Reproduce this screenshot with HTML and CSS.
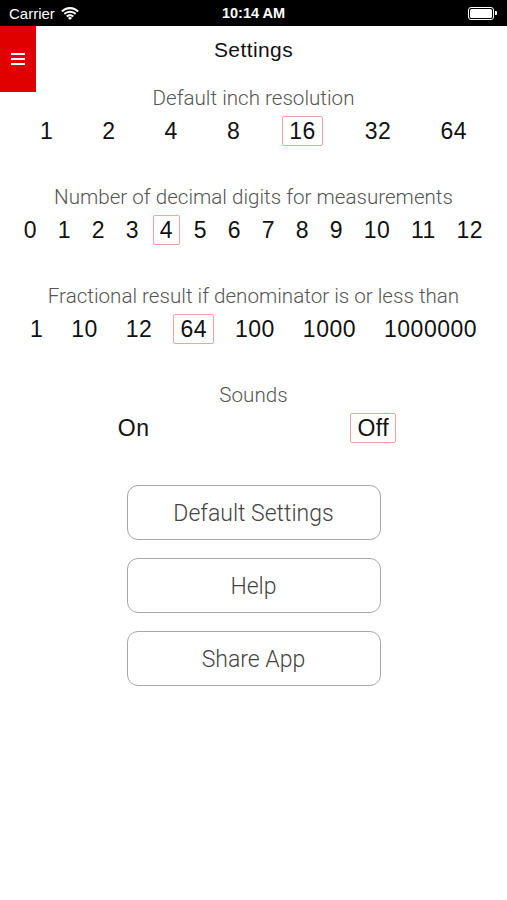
FILE: index.html
```html
<!DOCTYPE html>
<html lang="en">
<head>
  <meta charset="UTF-8" />
  <meta name="viewport" content="width=device-width, initial-scale=1.0"/>
  <title>Settings</title>
  <link rel="stylesheet" href="styles.css">
</head>
<body>

  <div class="status-bar">
    <div class="carrier">
      Carrier
      <svg class="wifi" width="18" height="13" viewBox="0 0 18 13">
        <path d="M9 2.2c2.9 0 5.5 1.1 7.4 3l1.4-1.5C15.5 1.4 12.4 0 9 0S2.5 1.4.2 3.7l1.4 1.5c1.9-1.9 4.5-3 7.4-3z" fill="#fff"/>
        <path d="M9 5.8c1.9 0 3.6.7 4.9 1.9l1.4-1.5C13.6 4.6 11.4 3.7 9 3.7S4.4 4.6 2.7 6.2l1.4 1.5C5.4 6.5 7.1 5.8 9 5.8z" fill="#fff"/>
        <path d="M9 9.3c1 0 1.8.4 2.5 1l1.4-1.5C11.9 7.9 10.5 7.3 9 7.3s-2.9.6-3.9 1.5l1.4 1.5c.7-.6 1.5-1 2.5-1z" fill="#fff"/>
        <path d="M9 13l2-2.1c-.5-.5-1.2-.8-2-.8s-1.5.3-2 .8z" fill="#fff"/>
      </svg>
    </div>
    <div class="clock">10:14 AM</div>
    <div class="battery">
      <span class="battery-body"><span class="battery-level"></span></span>
      <span class="battery-nub"></span>
    </div>
  </div>

  <div class="screen">
    <button class="menu-btn" aria-label="Menu">
      <span></span><span></span><span></span>
    </button>

    <h1>Settings</h1>

    <section class="option">
      <div class="label">Default inch resolution</div>
      <div class="choices wide">
        <span>1</span><span>2</span><span>4</span><span>8</span>
        <span class="selected">16</span><span>32</span><span>64</span>
      </div>
    </section>

    <section class="option">
      <div class="label">Number of decimal digits for measurements</div>
      <div class="choices tight">
        <span>0</span><span>1</span><span>2</span><span>3</span>
        <span class="selected">4</span><span>5</span><span>6</span><span>7</span>
        <span>8</span><span>9</span><span>10</span><span>11</span><span>12</span>
      </div>
    </section>

    <section class="option">
      <div class="label">Fractional result if denominator is or less than</div>
      <div class="choices medium">
        <span>1</span><span>10</span><span>12</span>
        <span class="selected">64</span><span>100</span><span>1000</span><span>1000000</span>
      </div>
    </section>

    <section class="option">
      <div class="label">Sounds</div>
      <div class="choices sounds">
        <span>On</span><span class="selected">Off</span>
      </div>
    </section>

    <div class="actions">
      <button class="action">Default Settings</button>
      <button class="action">Help</button>
      <button class="action">Share App</button>
    </div>
  </div>

</body>
</html>
```

FILE: styles.css
```css
body {
  margin: 0;
  font-family: "Liberation Sans", Arial, sans-serif;
  background-color: white;
  color: #111;
}

.status-bar {
  height: 26px;
  background-color: black;
  color: white;
  display: flex;
  align-items: center;
  justify-content: space-between;
  padding: 0 9px;
  position: relative;
  font-size: 15px;
}

.carrier {
  display: flex;
  align-items: center;
  gap: 6px;
}

.clock {
  position: absolute;
  left: 0;
  right: 0;
  text-align: center;
  font-weight: bold;
  font-size: 14.5px;
}

.battery {
  display: flex;
  align-items: center;
  margin-right: 1px;
}

.battery-body {
  width: 22px;
  height: 9px;
  border: 1px solid white;
  border-radius: 3px;
  padding: 1px;
}

.battery-level {
  display: block;
  height: 100%;
  background-color: white;
  border-radius: 1.5px;
}

.battery-nub {
  width: 2px;
  height: 4px;
  background-color: white;
  border-radius: 0 1px 1px 0;
  margin-left: 1px;
}

.screen {
  position: relative;
  padding-top: 12px;
  text-align: center;
}

.menu-btn {
  position: absolute;
  top: 0;
  left: 0;
  width: 36px;
  height: 66px;
  background-color: #e00000;
  border: none;
  padding: 0 11px;
  display: flex;
  flex-direction: column;
  justify-content: center;
  gap: 3px;
}

.menu-btn span {
  display: block;
  height: 2px;
  width: 14px;
  background-color: white;
}

h1 {
  margin: 0;
  font-size: 21px;
  letter-spacing: 0.4px;
  font-weight: normal;
  line-height: 24px;
  color: #111;
}

.option {
  margin-top: 24px;
}

.option + .option {
  margin-top: 39px;
}

.label {
  font-family: Roboto, "Liberation Sans", sans-serif;
  font-weight: 300;
  font-size: 20.6px;
  line-height: 24px;
  color: #555;
}

.choices {
  display: flex;
  justify-content: center;
  margin-top: 6px;
  font-size: 23px;
  letter-spacing: 0.5px;
}

.choices span {
  height: 28px;
  line-height: 28px;
  padding: 0 6px;
  border: 1px solid transparent;
  border-radius: 2px;
}

.choices .selected {
  border-color: #f2a4a4;
}

.wide {
  gap: 35px;
}

.tight {
  gap: 6.7px;
}

.medium {
  gap: 14px;
}

.sounds {
  gap: 194px;
}

.actions {
  margin-top: 42px;
  display: flex;
  flex-direction: column;
  align-items: center;
  gap: 18px;
}

.action {
  width: 254px;
  height: 55px;
  padding-top: 3px;
  background-color: white;
  border: 1px solid #a8a8a8;
  border-radius: 11px;
  font-family: Roboto, "Liberation Sans", sans-serif;
  font-weight: 300;
  font-size: 23px;
  color: #444;
}
```
